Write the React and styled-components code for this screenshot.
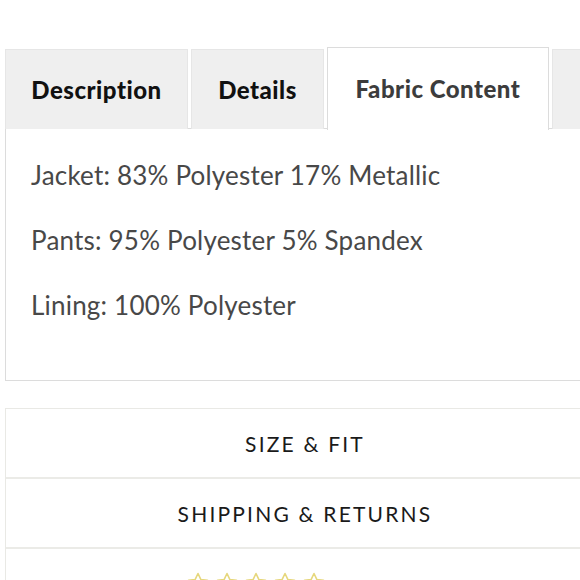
import React from 'react'
import styled, { createGlobalStyle } from 'styled-components';

const GlobalStyle = createGlobalStyle`
    html, body {
        margin: 0;
        padding: 0;
        background: #ffffff;
        overflow: hidden;
    }
`;

const tabs = [
    { label: 'Description', width: 183 },
    { label: 'Details', width: 133 },
    { label: 'Fabric Content', width: 222, active: true },
    { label: 'Reviews', width: 160 },
];

const fabric = [
    'Jacket: 83% Polyester 17% Metallic',
    'Pants: 95% Polyester 5% Spandex',
    'Lining: 100% Polyester',
];

function Star() {
    return (
        <svg width="24" height="24" viewBox="0 0 24 24" fill="none" stroke="#e6d77c" strokeWidth="1.6" strokeLinejoin="round">
            <path d="M12 2.5l2.9 6.1 6.6.8-4.9 4.6 1.3 6.6L12 17.3l-5.9 3.3 1.3-6.6-4.9-4.6 6.6-.8z" />
        </svg>
    )
}

function App() {
  return (
    <Page>
        <GlobalStyle />
        <TabBar>
            {tabs.map((t) => (
                <Tab key={t.label} $w={t.width} $active={t.active}>{t.label}</Tab>
            ))}
        </TabBar>
        <Panel>
            {fabric.map((line) => (
                <Line key={line}>{line}</Line>
            ))}
        </Panel>
        <Accordion>
            <Row>Size &amp; Fit</Row>
            <Row>Shipping &amp; Returns</Row>
            <StarRow>
                <Star /><Star /><Star /><Star /><Star />
            </StarRow>
        </Accordion>
    </Page>
  )
}

const Page = styled.div`
    width: 600px;
    padding: 47px 0 0 5px;
`;

const TabBar = styled.div`
    display: flex;
    align-items: flex-end;
    gap: 3px;
    height: 82px;
    margin-bottom: -1px;
    position: relative;
    z-index: 1;
`;

const Tab = styled.div`
    flex: 0 0 ${(p) => p.$w}px;
    box-sizing: border-box;
    height: ${(p) => (p.$active ? 83 : 80)}px;
    display: flex;
    align-items: center;
    justify-content: center;
    padding-bottom: ${(p) => (p.$active ? 1 : 0)}px;
    background: ${(p) => (p.$active ? '#ffffff' : '#efefef')};
    border: 1px solid ${(p) => (p.$active ? '#dcdcdc' : '#e6e6e6')};
    border-bottom: none;
    margin-bottom: ${(p) => (p.$active ? -1 : 0)}px;
    font-family: Lato, "Noto Sans", sans-serif;
    font-weight: 900;
    font-size: 24px;
    letter-spacing: 0.5px;
    color: ${(p) => (p.$active ? '#3c3c3c' : '#111111')};
    white-space: nowrap;
`;

const Panel = styled.div`
    box-sizing: border-box;
    height: 253px;
    border: 1px solid #dcdcdc;
    padding: 14px 0 0 25px;
`;

const Line = styled.div`
    font-family: Lato, "Noto Sans", sans-serif;
    font-weight: 400;
    font-size: 26px;
    line-height: 65px;
    letter-spacing: 0.2px;
    color: #484848;
    white-space: nowrap;
`;

const Accordion = styled.div`
    margin-top: 27px;
    border: 1px solid #e9e9e5;
    border-bottom: none;
`;

const Row = styled.div`
    height: 68px;
    border-bottom: 2px solid #ebebe7;
    display: flex;
    align-items: center;
    justify-content: center;
    font-family: Lato, "Noto Sans", sans-serif;
    font-size: 21px;
    letter-spacing: 2.2px;
    text-transform: uppercase;
    color: #1a1a1a;
`;

const StarRow = styled.div`
    display: flex;
    gap: 5px;
    padding: 22px 0 0 180px;
    height: 60px;
`;

export default App;
